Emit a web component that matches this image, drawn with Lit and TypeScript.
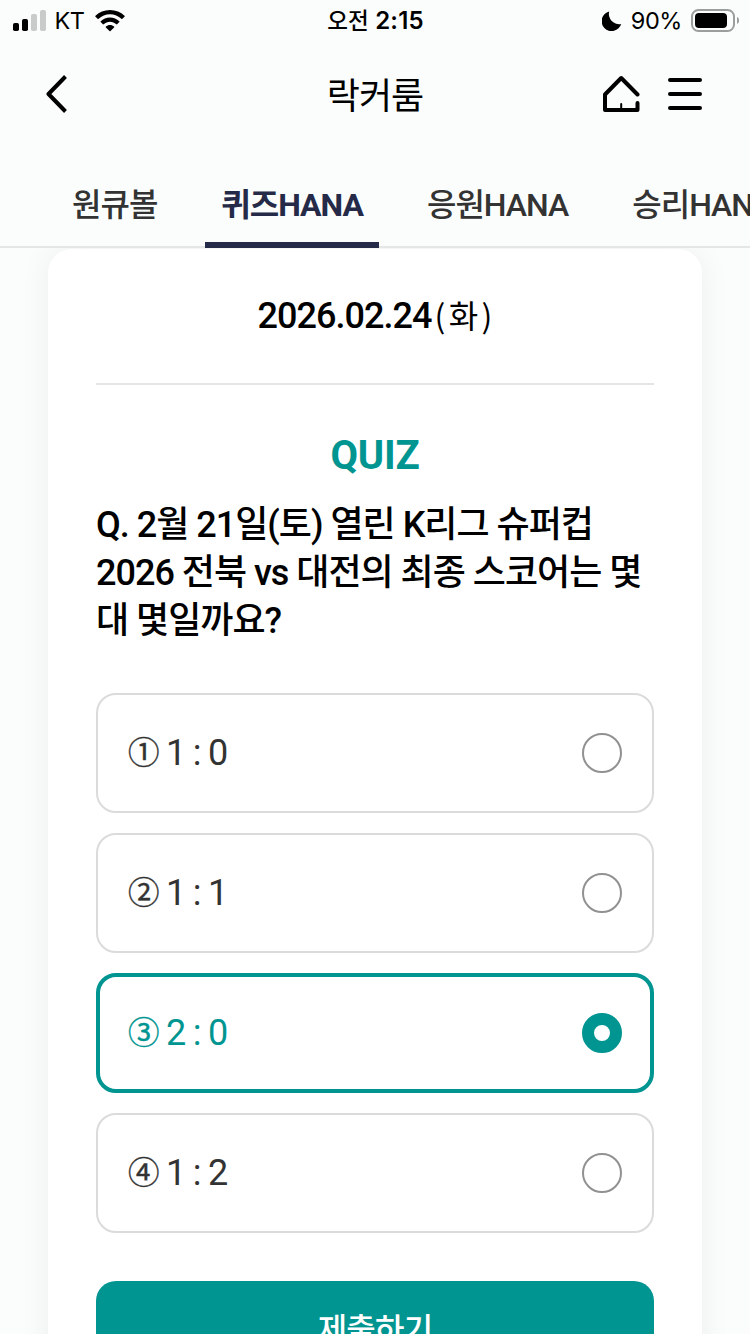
import { LitElement, html, css } from "lit";
import { customElement, state } from "lit/decorators.js";

interface Choice {
  mark: string;
  score: string;
}

const TABS = ["원큐볼", "퀴즈HANA", "응원HANA", "승리HANA"];

const CHOICES: Choice[] = [
  { mark: "①", score: "1 : 0" },
  { mark: "②", score: "1 : 1" },
  { mark: "③", score: "2 : 0" },
  { mark: "④", score: "1 : 2" },
];

@customElement("status-bar")
class StatusBar extends LitElement {
  static styles = css`
    :host {
      display: grid;
      grid-template-columns: 1fr auto 1fr;
      align-items: center;
      height: 40px;
      padding: 0 11px 0 13px;
      font-family: Inter, "Noto Sans CJK KR", sans-serif;
      font-size: 24px;
      line-height: 40px;
      color: #000;
    }
    .side {
      display: flex;
      align-items: center;
    }
    .right {
      justify-content: flex-end;
    }
    .carrier {
      margin: 0 11px 0 8.5px;
      padding-top: 1px;
      font-size: 23.5px;
      letter-spacing: -0.5px;
    }
    .clock {
      padding-top: 1px;
      margin-right: 1px;
      font-size: 24px;
      font-weight: 600;
      letter-spacing: 0.2px;
    }
    .period {
      font-size: 22.5px;
      font-weight: 500;
    }
    .percent {
      margin: 0 9px 0 9px;
      padding-top: 1px;
      font-size: 23.5px;
      letter-spacing: -0.4px;
    }
    svg {
      display: block;
    }
  `;

  render() {
    return html`
      <div class="side">
        <svg width="33" height="22" viewBox="0 0 33 22">
          <rect x="0" y="13" width="6" height="8" rx="1.8" />
          <rect x="9" y="9" width="6" height="12" rx="1.8" />
          <rect x="18" y="4" width="6" height="17" rx="1.8" fill="#c9cbca" />
          <rect x="27" y="0" width="6" height="21" rx="1.8" fill="#c9cbca" />
        </svg>
        <span class="carrier">KT</span>
        <svg width="30" height="22" viewBox="0 0 30 22">
          <path d="M15 0C9.3 0 4.200 2.200.500 5.800a.6.6 0 0 0 0 .9l2.100 2.100c.3.300.7.300 1 0C6.600 5.900 10.600 4.200 15 4.200s8.400 1.700 11.400 4.600c.3.300.7.300 1 0l2.100-2.100a.6.6 0 0 0 0-.9C25.800 2.200 20.700 0 15 0z" />
          <path d="M15 7.500c-3.600 0-6.900 1.400-9.300 3.700a.6.6 0 0 0 0 .9l2.200 2.200c.3.200.6.200.9 0 1.600-1.600 3.800-2.500 6.200-2.500s4.600.9 6.200 2.500c.3.200.6.200.9 0l2.200-2.200a.6.6 0 0 0 0-.9C21.900 8.900 18.600 7.500 15 7.500z" />
          <path d="M15 15c-1.600 0-3 .6-4.100 1.500-.3.300-.3.600 0 .9l3.600 3.600c.3.300.7.300 1 0l3.600-3.600c.3-.3.300-.6 0-.9C18 15.600 16.600 15 15 15z" />
        </svg>
      </div>
      <div class="clock"><span class="period">오전</span> 2:15</div>
      <div class="side right">
        <svg width="20" height="20" viewBox="0 0 20 20">
          <path d="M7.200.400A10 10 0 1 0 19.200 12.900 10.200 10.200 0 0 1 7.200.400z" />
        </svg>
        <span class="percent">90%</span>
        <svg width="48" height="24" viewBox="0 0 48 24">
          <rect x="1" y="1" width="42" height="21" rx="6.500" fill="none" stroke="#9c9e9d" stroke-width="2" />
          <rect x="4" y="4" width="32" height="15" rx="4" />
          <path d="M46 8c1.500.6 2.200 1.900 2.200 3.500s-.7 2.900-2.200 3.500z" fill="#9c9e9d" />
        </svg>
      </div>
    `;
  }
}

@customElement("title-bar")
class TitleBar extends LitElement {
  static styles = css`
    :host {
      display: grid;
      grid-template-columns: 1fr auto 1fr;
      align-items: center;
      height: 108px;
      padding: 0 48px 0 46px;
      color: #000;
    }
    .title {
      padding: 5px 0 0 2px;
      font-size: 36px;
      line-height: 52px;
      letter-spacing: -1px;
    }
    .actions {
      display: flex;
      justify-content: flex-end;
      gap: 28px;
    }
    svg {
      display: block;
    }
    .stroke {
      fill: none;
      stroke: #000;
      stroke-width: 4;
    }
  `;

  render() {
    return html`
      <svg class="stroke" width="22" height="38" viewBox="0 0 22 38">
        <path d="M19.500 1.500 2.500 19l17 17.500" stroke-linejoin="round" />
      </svg>
      <div class="title">락커룸</div>
      <div class="actions">
        <svg class="stroke" width="38" height="38" viewBox="0 0 38 38" stroke-linecap="round" stroke-linejoin="round">
          <path d="M35.500 19.500 19.200 3 3 19.500V35h32.500v-7" />
          <path d="M19.200 29v6" stroke-width="2" />
        </svg>
        <svg class="stroke" width="34" height="38" viewBox="0 0 34 38" stroke-linecap="round">
          <path d="M2 5h30M2 19h30M2 33h30" />
        </svg>
      </div>
    `;
  }
}

@customElement("tab-strip")
class TabStrip extends LitElement {
  static styles = css`
    :host {
      display: block;
      overflow: hidden;
      height: 100px;
    }
    .tabs {
      display: flex;
      gap: 32px;
      height: 98px;
      padding-left: 56px;
      border-bottom: 2px solid #e5e6e6;
    }
    .tab {
      flex: none;
      box-sizing: border-box;
      height: 100px;
      padding: 33px 16px 0;
      font-size: 32px;
      font-weight: 500;
      line-height: 48px;
      letter-spacing: -1px;
      color: #333;
      white-space: nowrap;
    }
    .active {
      border-bottom: 6px solid #252a48;
      font-weight: 700;
      color: #252a48;
    }
  `;

  render() {
    return html`
      <div class="tabs">
        ${TABS.map(
          (t, i) => html`<div class="tab ${i === 1 ? "active" : ""}">${t}</div>`
        )}
      </div>
    `;
  }
}

@customElement("app-root")
class AppRoot extends LitElement {
  static styles = css`
    :host {
      display: flex;
      flex-direction: column;
      width: 750px;
      height: 1334px;
      overflow: hidden;
      background: #fbfdfc;
      font-family: Roboto, "Noto Sans CJK KR", sans-serif;
      color: #000;
    }
    .body {
      flex: 1;
      min-height: 0;
      overflow: hidden;
      padding: 1px 48px 0;
    }
    .card {
      height: 1200px;
      padding: 0 48px;
      border-radius: 24px;
      background: #fff;
      box-shadow: 0 0 32px rgba(0, 30, 20, 0.06);
    }
    .date {
      display: flex;
      justify-content: center;
      align-items: baseline;
      box-sizing: border-box;
      height: 136px;
      padding: 39px 0 0 3px;
      border-bottom: 2px solid #e5e5e5;
      font-size: 36px;
      font-weight: 500;
      line-height: 52px;
      letter-spacing: -0.95px;
    }
    .weekday {
      margin-left: 3px;
      font-weight: 400;
      font-family: "Noto Sans CJK KR", sans-serif;
      font-size: 32px;
      letter-spacing: 3.3px;
    }
    .heading {
      padding-top: 45px;
      font-size: 40px;
      font-weight: 700;
      line-height: 52px;
      letter-spacing: -0.2px;
      text-align: center;
      color: #009591;
    }
    .question {
      padding-top: 19px;
      font-size: 36px;
      font-weight: 500;
      line-height: 48px;
      letter-spacing: -1px;
      white-space: nowrap;
    }
    .choices {
      display: flex;
      flex-direction: column;
      gap: 20px;
      padding-top: 48px;
    }
    .choice {
      display: flex;
      align-items: center;
      justify-content: space-between;
      box-sizing: border-box;
      height: 120px;
      padding: 0 30px;
      border: 2px solid #dbdbdb;
      border-radius: 20px;
      font-size: 36px;
      line-height: 48px;
      color: #333;
    }
    .picked {
      padding: 0 28px;
      border: 4px solid #009591;
      color: #009591;
    }
    .label {
      display: flex;
      letter-spacing: -1.2px;
    }
    .mark {
      width: 38px;
      font-family: "Noto Sans CJK KR", sans-serif;
      font-size: 31.5px;
      line-height: 43px;
      -webkit-text-stroke: 0.4px currentColor;
    }
    .radio {
      box-sizing: border-box;
      width: 40px;
      height: 40px;
      border: 2px solid #919191;
      border-radius: 50%;
    }
    .picked .radio {
      border: 12px solid #009591;
    }
    .submit {
      height: 112px;
      margin-top: 48px;
      border-radius: 20px;
      background: #009591;
      color: #fff;
      font-size: 32px;
      font-weight: 500;
      line-height: 98px;
      letter-spacing: -0.8px;
      text-align: center;
    }
  `;

  @state() private picked = 2;

  render() {
    return html`
      <status-bar></status-bar>
      <title-bar></title-bar>
      <tab-strip></tab-strip>
      <div class="body">
        <div class="card">
          <div class="date">2026.02.24<span class="weekday">(화)</span></div>
          <div class="heading">QUIZ</div>
          <div class="question">
            Q. 2월 21일(토) 열린 K리그 슈퍼컵<br />2026 전북 vs 대전의 최종 스코어는 몇<br />대 몇일까요?
          </div>
          <div class="choices">
            ${CHOICES.map(
              (c, i) => html`
                <div
                  class="choice ${i === this.picked ? "picked" : ""}"
                  @click=${() => (this.picked = i)}
                >
                  <div class="label"><span class="mark">${c.mark}</span><span>${c.score}</span></div>
                  <div class="radio"></div>
                </div>
              `
            )}
          </div>
          <div class="submit">제출하기</div>
        </div>
      </div>
    `;
  }
}
